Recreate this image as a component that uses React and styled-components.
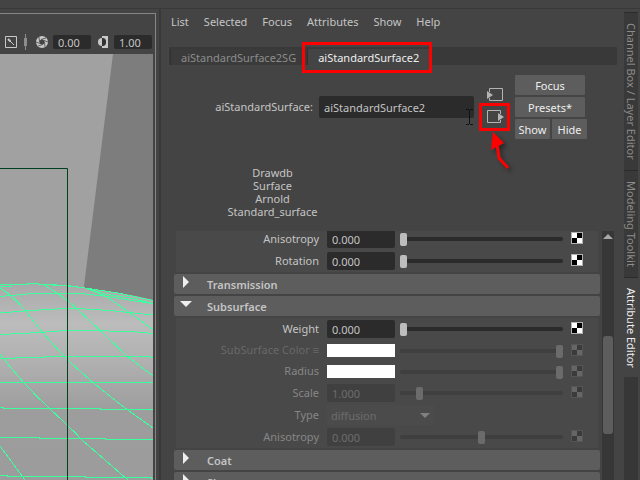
import React from "react";
import styled, { createGlobalStyle } from "styled-components";

const GlobalStyle = createGlobalStyle`
  * {
    box-sizing: border-box;
  }

  body {
    margin: 0;
    background-color: #444444;
  }

  body, button, input, select {
    font-family: "Noto Sans", "Open Sans", sans-serif;
    font-size: 11px;
    color: #c4c4c4;
  }
`;

const menus = ["List", "Selected", "Focus", "Attributes", "Show", "Help"];

const classification = ["Drawdb", "Surface", "Arnold", "Standard_surface"];

const specularRows = [
  { id: "spec-anisotropy", label: "Anisotropy", value: "0.000", slider: 0 },
  { id: "spec-rotation", label: "Rotation", value: "0.000", slider: 0 },
];

const subsurfaceRows = [
  { id: "sss-weight", label: "Weight", value: "0.000", slider: 0 },
  { id: "sss-color", label: "SubSurface Color ≡", swatch: "#ffffff", slider: 100, disabled: true, faint: true },
  { id: "sss-radius", label: "Radius", swatch: "#ffffff", slider: 100, disabled: true },
  { id: "sss-scale", label: "Scale", value: "1.000", slider: 10, disabled: true },
  { id: "sss-type", label: "Type", option: "diffusion", disabled: true },
  { id: "sss-anisotropy", label: "Anisotropy", value: "0.000", slider: 50, disabled: true },
];

function Scene() {
  return (
    <SceneSvg viewBox="0 54 153 426" preserveAspectRatio="xMinYMin slice">
      <defs>
        <linearGradient id="sphere" x1="0" y1="284" x2="0" y2="480" gradientUnits="userSpaceOnUse">
          <stop offset="0" stopColor="#a9a9a9" />
          <stop offset="0.2" stopColor="#bcbcbc" />
          <stop offset="0.4" stopColor="#b0b0b0" />
          <stop offset="0.65" stopColor="#9d9d9d" />
          <stop offset="1" stopColor="#9c9c9c" />
        </linearGradient>
      </defs>
      <rect x="0" y="54" width="153" height="426" fill="#a1a1a1" />
      <path d="M113 54H153V310H84V286Z" fill="#7d7d7d" />
      <path d="M0 285Q40 282 85 288T153 300V480H0Z" fill="url(#sphere)" />
      <g fill="none" stroke="#3cff9e" strokeWidth="1" shapeRendering="crispEdges">
        <path d="M0 284.500H27V283.500H38V284.500H52L68 286L85 288L118 293L153 300.500" />
        <path d="M0 286.500H12M52 285.500H68L85 288L105 294L130 298L153 303.500" />
        <path d="M0 296.500L10 295.500L25 294.500L30 293.500H80L108 296.500L138 301.500L153 303.500" />
        <path d="M0 313L30 310.500L66 308.500H78L110 310.500L153 315" />
        <path d="M0 334.500L20 333.500L40 332.500L66 330.500H100L118 331.500H132L153 333.500" />
        <path d="M0 358.500H15V357.500H44V356.500H148L153 357.500" />
        <path d="M0 382.500H153" />
        <path d="M0 407.500H3V408.500H100V409.500H153" />
        <path d="M0 437.500H39V438.500H105V439.500H153" />
        <path d="M0 475.500H7V476.500H85V477.500H150L153 478.500" />
        <path d="M0 288Q12 295 24 309Q46 338 66 358T125 408L153 428" />
        <path d="M43 284L60 295L68 301L89 320L107 337L127 356L153 376" />
        <path d="M85 288L98 293L107 297L123 308L140 320L153 330" />
        <path d="M0 354Q22 383 49 408T82 440L128 480" />
        <path d="M0 446L25 480" />
      </g>
      <path d="M0 168.500H67.500V480" fill="none" stroke="#00401f" />
    </SceneSvg>
  );
}

function ViewportPanel() {
  return (
    <Viewport>
      <ViewportToolbar>
        <ToolButton aria-label="Line tool">
          <svg width="12" height="12" viewBox="0 0 12 12" fill="none" stroke="#c8c8c8">
            <path d="M0.500 0.500H11.500V11.500H0.500Z" />
            <path d="M3 3L5.500 5.500" strokeWidth="2" />
            <path d="M5 5L9 9" />
          </svg>
        </ToolButton>
        <svg width="3" height="16" viewBox="0 0 3 16">
          <path d="M1 0H2V16H1ZM0 4H3V12H0Z" fill="#8c8c8c" />
        </svg>
        <ToolButton aria-label="Exposure">
          <svg width="12" height="12" viewBox="0 0 12 12">
            <circle cx="6" cy="6" r="6" fill="#c8c8c8" />
            <circle cx="6" cy="6" r="2.500" fill="#444444" />
            <path
              d="M3.500 6L3 1M5 3.500L10 2M8 4.500L12 6M8.500 6L9 11M7 8.500L2 10M4 7.500L0 6"
              stroke="#444444"
              strokeWidth="0.800"
              fill="none"
            />
          </svg>
        </ToolButton>
        <ToolField aria-label="Exposure value" defaultValue="0.00" />
        <ToolButton aria-label="Gamma">
          <svg width="12" height="12" viewBox="0 0 12 12" fill="#c8c8c8">
            <path d="M4 2A4 4 0 0 0 4 10Z" />
            <path d="M4 0H10V12H4V10A4 4 0 0 0 4 2Z" />
            <path d="M4 2A4 4 0 0 1 4 10Z" fill="#333333" />
          </svg>
        </ToolButton>
        <ToolField aria-label="Gamma value" defaultValue="1.00" />
      </ViewportToolbar>
      <Scene />
    </Viewport>
  );
}

function Checker({ disabled }) {
  return (
    <CheckerButton disabled={disabled} aria-label="Map">
      <svg width="12" height="12" viewBox="0 0 12 12" shapeRendering="crispEdges">
        <rect width="12" height="12" fill={disabled ? "#555555" : "#b0b0b0"} />
        <rect x="1" y="1" width="10" height="10" fill={disabled ? "#666666" : "#ffffff"} />
        <path d="M6 1H11V6H6ZM1 6H6V11H1Z" fill={disabled ? "#3b3b3b" : "#000000"} />
      </svg>
    </CheckerButton>
  );
}

function AttributeRow({ row }) {
  const { id, label, value, swatch, option, slider, disabled, faint } = row;
  return (
    <Row $short={Boolean(swatch)}>
      <RowLabel htmlFor={id} $disabled={disabled} $faint={faint}>{label}</RowLabel>
      {value && <NumberField id={id} defaultValue={value} disabled={disabled} />}
      {swatch && <Swatch id={id} $color={swatch} disabled={disabled} />}
      {option && (
        <TypeBox>
          <TypeSelect id={id} disabled={disabled}>
            <option>{option}</option>
          </TypeSelect>
          <svg width="10" height="5" viewBox="0 0 10 5">
            <path d="M0 0H10L5 5Z" fill="#808080" />
          </svg>
        </TypeBox>
      )}
      {slider !== undefined && (
        <>
          <Slider type="range" aria-label={label} defaultValue={slider} disabled={disabled} />
          <Checker disabled={disabled} />
        </>
      )}
    </Row>
  );
}

function Section({ title, open, children }) {
  return (
    <>
      <SectionHeader aria-expanded={Boolean(open)}>
        {open ? (
          <svg width="12" height="12" viewBox="0 0 12 12">
            <path d="M0 3H12L6 9Z" fill="#eeeeee" />
          </svg>
        ) : (
          <svg width="12" height="12" viewBox="0 0 12 12">
            <path d="M3 0L9 6L3 12Z" fill="#eeeeee" />
          </svg>
        )}
        <SectionTitle>{title}</SectionTitle>
      </SectionHeader>
      {open && <Frame>{children}</Frame>}
    </>
  );
}

function NodeHeader() {
  return (
    <NodeForm>
      <NodeLabel htmlFor="node-name">aiStandardSurface:</NodeLabel>
      <NameBox>
        <NameField id="node-name" defaultValue="aiStandardSurface2" />
        <TextCursor width="7" height="16" viewBox="0 0 7 16">
          <path d="M0 0.500H3M4 0.500H7M3.500 1V15M0 15.500H3M4 15.500H7" stroke="#111111" fill="none" />
        </TextCursor>
      </NameBox>
      <ConnectionButtons>
        <IconButton type="button" aria-label="Go to input connection">
          <svg width="18" height="14" viewBox="0 0 18 14">
            <path d="M3.500 4V0.500H16.500V12.500H3.500V10" fill="none" stroke="#b4b4b4" />
            <path d="M1 3L7 7L1 11Z" fill="#b4b4b4" />
          </svg>
        </IconButton>
        <IconButton type="button" aria-label="Go to output connection">
          <svg width="18" height="14" viewBox="0 0 18 14">
            <path d="M14.500 4V0.500H1.500V12.500H14.500V10" fill="none" stroke="#b4b4b4" />
            <path d="M12 3L18 7L12 11Z" fill="#b4b4b4" />
          </svg>
          <ButtonMark />
          <Arrow width="28" height="44" viewBox="0 0 28 44">
            <path d="M11 12L13 26L22 36" fill="none" stroke="#ff0000" strokeWidth="3" />
            <path d="M7 0L5 18L18 11Z" fill="#ff0000" />
          </Arrow>
        </IconButton>
      </ConnectionButtons>
      <Actions>
        <ActionButton type="button" $wide>Focus</ActionButton>
        <ActionButton type="button" $wide>Presets*</ActionButton>
        <ActionButton type="button">Show</ActionButton>
        <ActionButton type="button">Hide</ActionButton>
      </Actions>
    </NodeForm>
  );
}

function AttributeEditor() {
  return (
    <Editor>
      <MenuBar>
        {menus.map((menu) => (
          <MenuButton key={menu}>{menu}</MenuButton>
        ))}
      </MenuBar>
      <Tabs>
        <Tab>aiStandardSurface2SG</Tab>
        <Tab $active>
          aiStandardSurface2
          <TabMark />
        </Tab>
      </Tabs>
      <NodeHeader />
      <Classification>
        {classification.map((name) => (
          <span key={name}>{name}</span>
        ))}
      </Classification>
      <ScrollArea>
        <Attributes>
          <Frame>
            {specularRows.map((row) => (
              <AttributeRow key={row.id} row={row} />
            ))}
          </Frame>
          <Section title="Transmission" />
          <Section title="Subsurface" open>
            {subsurfaceRows.map((row) => (
              <AttributeRow key={row.id} row={row} />
            ))}
          </Section>
          <Section title="Coat" />
          <Section title="Sheen" />
        </Attributes>
        <ScrollBar>
          <svg width="10" height="5" viewBox="0 0 10 5">
            <path d="M5 0L10 5H0Z" fill="#a8a8a8" />
          </svg>
          <ScrollThumb />
        </ScrollBar>
      </ScrollArea>
    </Editor>
  );
}

function App() {
  return (
    <>
      <GlobalStyle />
      <Page>
        <ViewportPanel />
        <AttributeEditor />
        <SideBar>
          <SideTab>Channel Box / Layer Editor</SideTab>
          <SideTab>Modeling Toolkit</SideTab>
          <SideTab $active>Attribute Editor</SideTab>
          <SideFill />
        </SideBar>
      </Page>
    </>
  );
}

const Page = styled.div`
  height: 100vh;
  display: flex;
  padding-top: 8px;
  background-color: #444444;
  overflow: hidden;
`;

const Viewport = styled.section`
  flex: 0 0 25%;
  display: flex;
  flex-direction: column;
  padding: 4px 3px 0 0;
  border-top: 1px solid #393939;
  border-right: 1px solid #393939;
`;

const ViewportToolbar = styled.div`
  height: 41px;
  flex: none;
  display: flex;
  align-items: center;
  padding: 16px 3px 0 4px;
  border-top: 1px solid #858585;
  border-right: 1px solid #858585;
`;

const ToolButton = styled.button`
  display: flex;
  padding: 1px;
  margin: 0 6px 0 0;
  border: none;
  background: none;

  svg + & {
    margin: 0 4px 0 8px;
  }

  input + & {
    margin: 0 3px 0 6px;
  }
`;

const ToolField = styled.input`
  width: 38px;
  height: 14px;
  padding: 0 5px;
  border: none;
  border-radius: 2px;
  background-color: #2b2b2b;
`;

const SceneSvg = styled.svg`
  flex: 1;
  min-height: 0;
  width: 100%;
  padding-right: 2px;
  border-right: 1px solid #858585;
`;

const Editor = styled.main`
  flex: 1;
  min-width: 0;
  display: flex;
  flex-direction: column;
  border-top: 1px solid #393939;
  border-left: 1px solid #393939;
`;

const MenuBar = styled.nav`
  display: flex;
  gap: 15px;
  padding: 5px 10px 0;
`;

const MenuButton = styled.button`
  height: 16px;
  padding: 0;
  border: none;
  background: none;
  line-height: 16px;
`;

const Tabs = styled.div`
  height: 18px;
  display: flex;
  margin: 17px 7px 0 8px;
  padding-top: 2px;
  background-color: #393939;
`;

const Tab = styled.button`
  position: relative;
  height: 16px;
  padding: 2px 10px 0;
  margin-left: 1px;
  border: none;
  border-left: 1px solid #303030;
  line-height: 14px;
  background-color: ${(props) => (props.$active ? "#444444" : "#3b3b3b")};
  color: ${(props) => (props.$active ? "#eeeeee" : "#8c8c8c")};
`;

const TabMark = styled.span`
  position: absolute;
  inset: -7px -3px -8px -6px;
  border: 3px solid #ff0000;
`;

const NodeForm = styled.form`
  display: flex;
  align-items: flex-start;
  margin-top: 10px;
  padding-right: 37px;
`;

const NodeLabel = styled.label`
  width: 152px;
  margin-top: 24px;
  text-align: right;
  line-height: 16px;
`;

const NameBox = styled.div`
  position: relative;
  flex: 1;
  margin: 21px 12px 0 6px;
`;

const NameField = styled.input`
  display: block;
  width: 100%;
  height: 22px;
  padding: 0 5px;
  border: none;
  border-radius: 2px;
  background-color: #2b2b2b;
`;

const TextCursor = styled.svg`
  position: absolute;
  right: 1px;
  top: 13px;
`;

const ConnectionButtons = styled.div`
  display: flex;
  flex-direction: column;
  gap: 8px;
  margin: 13px 11px 0 0;
`;

const IconButton = styled.button`
  position: relative;
  display: flex;
  padding: 0;
  border: none;
  background: none;
`;

const ButtonMark = styled.span`
  position: absolute;
  inset: -7px -6px -7px -7px;
  border: 3px solid #ff0000;
`;

const Arrow = styled.svg`
  position: absolute;
  left: 0;
  top: 22px;
  filter: drop-shadow(3px 3px 2px rgba(0, 0, 0, 0.4));
`;

const Actions = styled.div`
  width: 72px;
  display: flex;
  flex-wrap: wrap;
  gap: 2px;
`;

const ActionButton = styled.button`
  width: ${(props) => (props.$wide ? "70px" : "35px")};
  height: 20px;
  padding: 0;
  border: none;
  border-radius: 1px;
  background-color: #5d5d5d;
  color: #eeeeee;
`;

const Classification = styled.div`
  width: 223px;
  display: flex;
  flex-direction: column;
  margin-top: 27px;
  text-align: center;
  line-height: 13px;
`;

const ScrollArea = styled.div`
  flex: 1;
  min-height: 0;
  display: flex;
  gap: 2px;
  margin-top: 13px;
  padding: 0 10px 0 13px;
  overflow: hidden;
`;

const Attributes = styled.div`
  flex: 1;
  min-width: 0;
  display: flex;
  flex-direction: column;
  gap: 2px;
  margin-top: -3px;
`;

const Frame = styled.div`
  flex: none;
  margin: 0 2px;
  background-color: #494949;
`;

const Row = styled.div`
  height: ${(props) => (props.$short ? "21px" : "22px")};
  display: flex;
  align-items: center;
  padding-right: 15px;
`;

const RowLabel = styled.label`
  width: 143px;
  margin: 0 8px 2px 0;
  text-align: right;
  color: ${(props) => (props.$faint ? "#686868" : props.$disabled ? "#868686" : "#c4c4c4")};
`;

const NumberField = styled.input`
  width: 68px;
  height: 18px;
  padding: 0 5px;
  border: none;
  border-radius: 2px;
  background-color: #2b2b2b;

  &:disabled {
    background-color: #404040;
    color: #6c6c6c;
  }
`;

const Swatch = styled.button`
  width: 68px;
  height: 13px;
  padding: 0;
  border: none;
  background-color: ${(props) => props.$color};
`;

const TypeBox = styled.div`
  width: 107px;
  height: 20px;
  display: flex;
  align-items: center;
  padding: 0 4px;
  background-color: #4b4b4b;
`;

const TypeSelect = styled.select`
  flex: 1;
  appearance: none;
  padding: 0;
  border: none;
  background: none;

  &:disabled {
    color: #6c6c6c;
    opacity: 1;
  }
`;

const Slider = styled.input`
  flex: 1;
  min-width: 0;
  height: 13px;
  margin: 0 8px 0 5px;
  appearance: none;
  background: none;

  &::-webkit-slider-runnable-track {
    height: 4px;
    border-radius: 2px;
    background-color: ${(props) => (props.disabled ? "#3f3f3f" : "#2b2b2b")};
  }

  &::-webkit-slider-thumb {
    appearance: none;
    width: 7px;
    height: 13px;
    margin-top: -4px;
    border-radius: 2px;
    background-color: ${(props) => (props.disabled ? "#6b6b6b" : "#bdbdbd")};
  }
`;

const CheckerButton = styled.button`
  display: flex;
  padding: 0;
  margin-bottom: 2px;
  border: none;
  background: none;
`;

const SectionHeader = styled.button`
  flex: none;
  height: 20px;
  display: flex;
  gap: 15px;
  padding: 2px 6px;
  border: none;
  border-radius: 2px;
  background-color: #5d5d5d;
`;

const SectionTitle = styled.span`
  font-weight: 600;
  line-height: 18px;
`;

const ScrollBar = styled.div`
  width: 12px;
  display: flex;
  flex-direction: column;
  align-items: center;
  padding-top: 3px;
  background-color: #373737;
`;

const ScrollThumb = styled.div`
  width: 10px;
  height: 40%;
  margin-top: 97px;
  border-radius: 3px;
  background-color: #5d5d5d;
`;

const SideBar = styled.aside`
  width: 16px;
  display: flex;
  flex-direction: column;
  padding: 3px 2px 0 0;
  border-top: 1px solid #393939;
`;

const SideTab = styled.button`
  width: 14px;
  padding: 10px 0;
  border: none;
  border-top: 1px solid #2b2b2b;
  writing-mode: vertical-rl;
  text-align: center;
  line-height: 14px;
  background-color: ${(props) => (props.$active ? "#444444" : "#393939")};
  color: ${(props) => (props.$active ? "#eeeeee" : "#8c8c8c")};
`;

const SideFill = styled.div`
  flex: 1;
  background-color: #373737;
`;

export default App;
